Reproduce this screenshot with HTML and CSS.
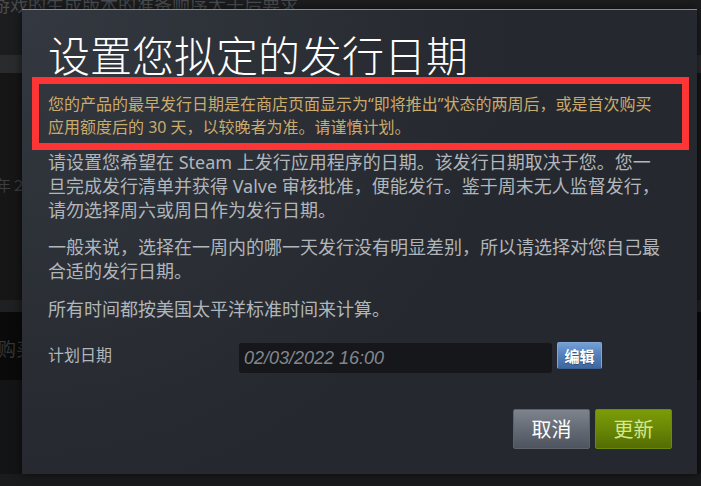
FILE: index.html
```html
<!DOCTYPE html>
<html lang="zh-CN">
<head>
<meta charset="utf-8">
<title>设置您拟定的发行日期</title>
<link rel="stylesheet" href="styles.css">
</head>
<body>
<div class="backdrop">
  <div class="bg-top"><span class="bg-text top-text">游戏的生成版本的准备顺序大于后要求</span></div>
  <div class="bg-band"></div>
  <div class="bg-mid"><span class="bg-text mid-text">年２</span></div>
  <div class="bg-band2"></div>
  <div class="bg-dark"><span class="bg-text buy-text">购买</span></div>
  <div class="bg-low"></div>
  <div class="bg-bottom"></div>
</div>

<div class="modal">
  <h1 class="title">设置您拟定的发行日期</h1>
  <div class="note">您的产品的最早发行日期是在商店页面显示为“即将推出”状态的两周后，或是首次购买<br>应用额度后的 30 天，以较晚者为准。请谨慎计划。</div>
  <p class="para first">请设置您希望在 Steam 上发行应用程序的日期。该发行日期取决于您。您一<br>旦完成发行清单并获得 Valve 审核批准，便能发行。鉴于周末无人监督发行，<br>请勿选择周六或周日作为发行日期。</p>
  <p class="para">一般来说，选择在一周内的哪一天发行没有明显差别，所以请选择对您自己最<br>合适的发行日期。</p>
  <p class="para last">所有时间都按美国太平洋标准时间来计算。</p>
  <div class="date-row">
    <div class="date-label">计划日期</div>
    <div class="date-input">02/03/2022 16:00</div>
    <div class="btn-edit">编辑</div>
  </div>
  <div class="actions">
    <div class="btn btn-cancel">取消</div>
    <div class="btn btn-update">更新</div>
  </div>
</div>
</body>
</html>
```

FILE: styles.css
```css
html, body {
  margin: 0;
  padding: 0;
}
body {
  width: 701px;
  height: 486px;
  overflow: hidden;
  background: #121213;
  font-family: "Noto Sans", "Noto Sans CJK SC", sans-serif;
  position: relative;
}

/* backdrop (page behind the modal) */
.backdrop {
  display: flex;
  flex-direction: column;
  height: 486px;
}
.bg-top {
  height: 55px;
  background: #1c1d1f;
  overflow: hidden;
}
.bg-band {
  height: 18px;
  background: #2a2b2d;
}
.bg-mid {
  height: 227px;
  background: #161617;
  overflow: hidden;
}
.bg-band2 {
  height: 12px;
  background: #1f2021;
}
.bg-dark {
  height: 68px;
  background: #0a0a0a;
  overflow: hidden;
}
.bg-low {
  height: 94px;
  background: #131416;
}
.bg-bottom {
  height: 12px;
  background: #1a1b1d;
}
.bg-text {
  display: block;
  font-family: "Noto Sans CJK SC", sans-serif;
  white-space: nowrap;
}
.top-text {
  font-size: 18px;
  line-height: 18px;
  color: #4a4c50;
  margin-top: -5px;
  margin-left: -8px;
}
.mid-text {
  font-size: 15px;
  line-height: 16px;
  color: #3c3e41;
  margin-top: 104px;
  margin-left: -4px;
}
.buy-text {
  font-size: 18px;
  line-height: 20px;
  color: #343537;
  margin-top: 26px;
  margin-left: -2px;
}

/* modal */
.modal {
  position: absolute;
  left: 22px;
  top: 9px;
  width: 675px;
  height: 465px;
  box-sizing: border-box;
  border-top: 1px solid #1fb2e8;
  background: radial-gradient(circle at top left, rgba(74, 81, 92, 0.4) 0%, rgba(75, 81, 92, 0) 60%), #25282e;
  box-shadow: 0 0 10px rgba(0, 0, 0, 0.6);
  padding: 19px 25px 25px 26px;
  display: flex;
  flex-direction: column;
}
.title {
  margin: 0;
  font-family: "Noto Sans CJK SC", sans-serif;
  font-weight: 300;
  font-size: 42px;
  line-height: 50px;
  color: #ffffff;
  white-space: nowrap;
}
.note {
  position: relative;
  margin-top: 14px;
  font-size: 16px;
  line-height: 23px;
  color: #cbab6c;
  white-space: nowrap;
}
.note::after {
  content: "";
  position: absolute;
  top: -16px;
  left: -16px;
  width: 657px;
  height: 73px;
  box-sizing: border-box;
  border: 7px solid #fd3535;
}
.para {
  margin: 13px 0 0;
  font-size: 18px;
  line-height: 24px;
  color: #b1b6bb;
  white-space: nowrap;
}
.para.first {
  margin-top: 11px;
}
.para.last {
  margin-top: 14px;
}

.date-row {
  margin-top: 22px;
  display: flex;
  align-items: flex-start;
}
.date-label {
  width: 191px;
  font-size: 16px;
  line-height: 24px;
  color: #b1b6bb;
}
.date-input {
  width: 313px;
  height: 30px;
  box-sizing: border-box;
  padding-left: 5px;
  background: #16171b;
  border-radius: 3px;
  font-family: "Liberation Sans", Arial, sans-serif;
  font-style: italic;
  font-size: 18px;
  line-height: 30px;
  color: #83878c;
}
.btn-edit {
  margin-left: 5px;
  margin-top: -1px;
  width: 45px;
  height: 27px;
  box-sizing: border-box;
  border-radius: 2px;
  border: 1px solid #7ea6d8;
  border-bottom-color: #3a5f92;
  background: linear-gradient(to bottom, #759fd4 0%, #5581bd 45%, #3d679f 100%);
  color: #ffffff;
  font-family: "Noto Sans CJK SC", sans-serif;
  font-weight: 700;
  font-size: 15px;
  line-height: 25px;
  text-align: center;
  text-shadow: 0 1px 1px rgba(0, 0, 0, 0.35);
}

.actions {
  margin-top: auto;
  display: flex;
  justify-content: flex-end;
  gap: 5px;
}
.btn {
  width: 77px;
  height: 40px;
  box-sizing: border-box;
  border-radius: 2px;
  font-family: "Noto Sans CJK SC", sans-serif;
  font-size: 20px;
  line-height: 38px;
  text-align: center;
}
.btn-cancel {
  border: 1px solid #5d646e;
  background: linear-gradient(to bottom, #7d848d 0%, #646b75 50%, #4e545f 100%);
  color: #ffffff;
}
.btn-update {
  border: 1px solid #6c8a0a;
  background: linear-gradient(to bottom, #7b9c08 0%, #6a8706 50%, #546c04 100%);
  color: #d4e98c;
}
```
